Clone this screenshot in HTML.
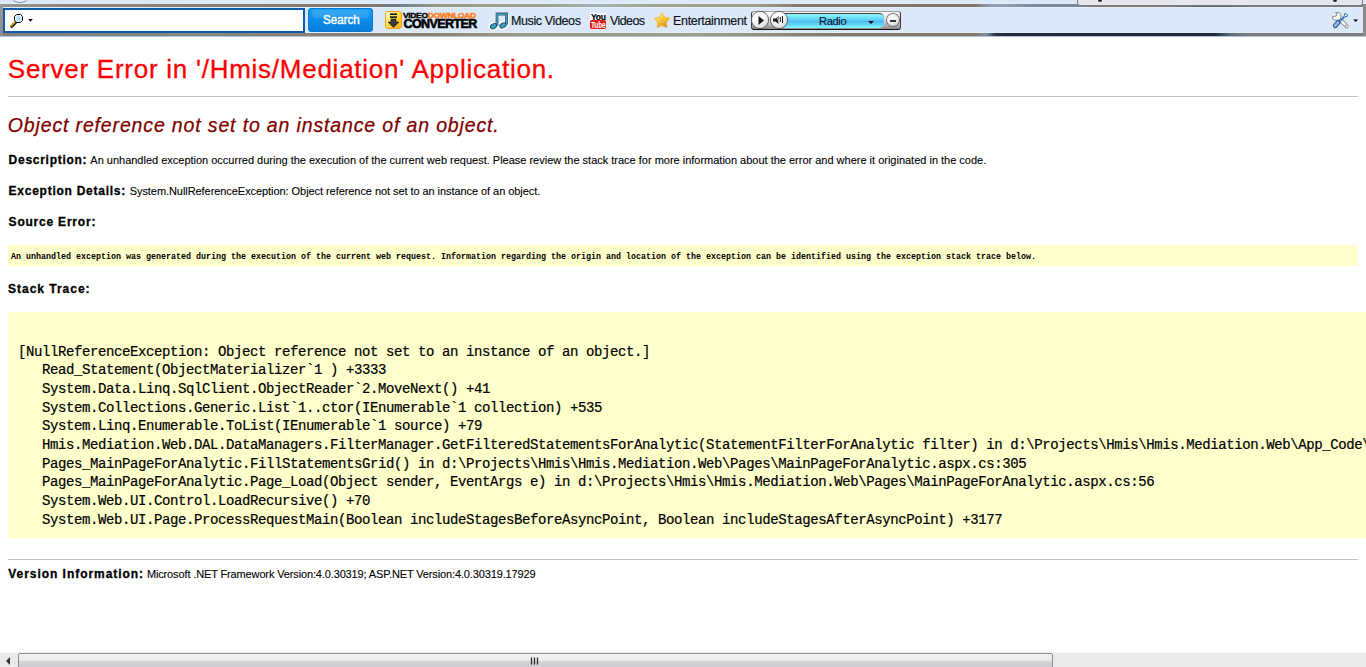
<!DOCTYPE html>
<html><head><meta charset="utf-8"><title>Server Error</title>
<style>
html,body{margin:0;padding:0;width:1366px;height:667px;overflow:hidden;background:#fff}
body{position:relative;font-family:"Liberation Sans",sans-serif}
.tx{position:absolute;white-space:pre;line-height:20px}
.bl{display:inline-block;width:0;height:0;vertical-align:baseline}
.abs{position:absolute}
.hr{position:absolute;left:8px;width:1350px;height:1px;background:#c0c0c0}
.yb{position:absolute;background:#ffffcc}
#stk{position:absolute;left:18px;margin:0;font-family:"Liberation Mono",monospace;font-size:14px;letter-spacing:-0.4px;line-height:18.65px;white-space:pre;color:#000;-webkit-text-stroke:0.2px #000}
/* toolbar */
#tb{position:absolute;left:0;top:0;width:1366px;height:37px;background:#dae8f7;overflow:hidden}
#tb .band{position:absolute;left:0;width:1366px;height:3px}
#tb .tk{position:absolute;color:#0a1020;font-size:12.5px;line-height:15px;white-space:pre;-webkit-text-stroke:0.15px #0a1020}
</style></head><body>

<div id="tb">
  <div class="abs" style="left:0;top:0;width:1366px;height:4px;background:#dce9f7"></div>
  <div class="abs" style="left:0;top:3px;width:1366px;height:1px;background:#e3effc"></div>
  <div class="band" style="top:4px;background:linear-gradient(to right,#9c9894 0px,#8e857c 60px,#877a6e 300px,#857a70 370px,#6f7e8e 400px,#9a9a82 440px,#9b9f88 540px,#a3b2b2 600px,#9fa58c 650px,#9c9c84 760px,#857868 800px,#847666 975px,#8aa0b8 990px,#8a9cb0 1010px,#7a8a9a 1035px,#7a8a9a 1077px,#867a70 1090px,#80786e 1170px,#5e6670 1200px,#646a72 1230px,#7a7a7a 1250px,#7a7a7a 1362px,#8c8c8c 1366px)"></div>
  <div class="abs" style="left:0;top:7px;width:1366px;height:1px;background:#e1eefc"></div>
  <div class="abs" style="left:0;top:32px;width:1366px;height:1px;background:#e1eefc"></div>
  <div class="band" style="top:33px;background:linear-gradient(to right,#7f7f7f 0px,#8a8580 200px,#8a7f74 330px,#8c7f6e 420px,#9a9a86 520px,#9ca088 700px,#857868 840px,#857868 975px,#8090a0 986px,#2a3848 995px,#1e2c3c 1005px,#1c2a3a 1215px,#5a6a7a 1230px,#7c7c7c 1245px,#7c7c7c 1362px)"></div>
  <div class="abs" style="left:0;top:36px;width:1366px;height:1px;background:#b2c2d4"></div>
  <div class="abs" style="left:0;top:4px;width:3px;height:32px;background:linear-gradient(#9c9a98,#8c8c8c)"></div>
  <div class="abs" style="left:1363px;top:4px;width:3px;height:32px;background:#8a8a8a"></div>
  <!-- tooltip remnant at top right -->
  <div class="abs" style="left:1077px;top:-4px;width:284px;height:8px;background:#e6e6ef;border:1px solid #7c7c7c;border-radius:0 0 3px 3px"></div>
  <div class="abs" style="left:1098px;top:0;width:4px;height:2px;background:#222;border-radius:0 0 2px 2px"></div>
  <div class="abs" style="left:1333px;top:0;width:4px;height:2px;background:#222;border-radius:0 0 2px 2px"></div>
  <!-- ellipse at top-left -->
  <div class="abs" style="left:13px;top:-4px;width:12px;height:5px;border:1px solid #7f94ab;border-radius:50%;background:#e8f0f8"></div>

  <!-- search box -->
  <div class="abs" style="left:3px;top:8px;width:298px;height:21px;border:2px solid #0d5cab;background:#fff"></div>
  <svg class="abs" style="left:8px;top:12px" width="28" height="18" viewBox="0 0 28 18">
    <path d="M7.6 10.4 L3.6 14.4" stroke="#000" stroke-width="2.8" stroke-linecap="round"/>
    <path d="M7 10 L3 14" stroke="#f5b400" stroke-width="1.7" stroke-linecap="round"/>
    <path d="M8.6 2.5 h3.8 l2.1 2.1 v3.8 l-2.1 2.1 h-3.8 l-2.1 -2.1 v-3.8 z" fill="#e6f6fe" stroke="#000" stroke-width="1"/>
    <rect x="8.5" y="4.5" width="4" height="4" fill="#a9dcf8"/>
    <path d="M20.2 7 h4.6 l-2.3 2.7 z" fill="#000"/>
  </svg>
  <!-- search button -->
  <div class="abs" style="left:308px;top:8px;width:65px;height:24px;border-radius:4px;background:linear-gradient(#18a2f6,#0a8ae8 55%,#0a7edb);box-shadow:inset 0 0 0 1px #0a78d0"></div>
  <div class="abs" style="left:312px;top:10px;width:57px;height:8px;border-radius:4px;background:rgba(255,255,255,0.13)"></div>
  <div class="tk" style="left:322.5px;top:12px;color:#fff;font-size:13.5px;letter-spacing:0px;-webkit-text-stroke:0.45px #fff;transform:scaleX(0.86);transform-origin:0 0">Search</div>

  <!-- video download converter logo -->
  <div class="abs" style="left:385px;top:11px;width:15px;height:16px;border:1px solid #f0a020;border-radius:3px;background:linear-gradient(135deg,#fffbe0 0%,#ffe45a 40%,#ffb010 100%)"></div>
  <svg class="abs" style="left:385px;top:11px" width="18" height="18" viewBox="0 0 18 18">
    <rect x="5" y="2.4" width="7" height="1.6" fill="#111"/>
    <rect x="5" y="5.3" width="7" height="1.6" fill="#111"/>
    <path d="M6 8 h5 v3 h3 l-5.5 5.5 l-5.5 -5.5 h3 z" fill="#3a3a3a" stroke="#111" stroke-width="0.6"/>
  </svg>
  <div class="abs" style="left:403px;top:11.5px;font:bold 8.5px 'Liberation Sans';line-height:8px;letter-spacing:-0.35px;white-space:pre;color:#000;-webkit-text-stroke:0.45px #000;transform:scaleY(0.88);transform-origin:0 0">VIDEO<span style="color:#ff7a12;-webkit-text-stroke:0.45px #ff7a12">DOWNLOAD</span></div>
  <div class="abs" style="left:403.5px;top:19px;font:900 12.5px 'Liberation Sans';font-weight:bold;line-height:11px;letter-spacing:-0.6px;white-space:pre;color:#000;-webkit-text-stroke:0.6px #000">CONVERTER</div>

  <!-- music note -->
  <svg class="abs" style="left:488px;top:10px" width="22" height="21" viewBox="0 0 22 21">
    <g fill="none" stroke="#fff" stroke-width="4.2" stroke-linejoin="round" stroke-linecap="round" opacity="0.95">
      <path d="M9 15.5 V4 H18.5 V14.5"/>
      <ellipse cx="5.6" cy="16.2" rx="3.3" ry="2.2" transform="rotate(-28 5.6 16.2)"/>
      <ellipse cx="15" cy="15.4" rx="3.3" ry="2.2" transform="rotate(-28 15 15.4)"/>
    </g>
    <path d="M9 15.5 V4 H18.5 V14.5" fill="none" stroke="#1d5468" stroke-width="2.8" stroke-linejoin="miter"/>
    <path d="M9 15.5 V4.2 H18.5 V14.5" fill="none" stroke="#45a8cc" stroke-width="1.2" stroke-linejoin="miter"/>
    <ellipse cx="5.6" cy="16.2" rx="3.4" ry="2.3" transform="rotate(-28 5.6 16.2)" fill="#3d9fc4" stroke="#1d5468" stroke-width="1"/>
    <ellipse cx="15" cy="15.4" rx="3.4" ry="2.3" transform="rotate(-28 15 15.4)" fill="#3d9fc4" stroke="#1d5468" stroke-width="1"/>
  </svg>
  <div class="tk" style="left:511px;top:14px;letter-spacing:-0.38px">Music Videos</div>

  <!-- youtube -->
  <div class="abs" style="left:590px;top:13px;width:16px;height:7px;background:#fff"></div>
  <div class="abs" style="left:591px;top:12.5px;font:bold 8.5px 'Liberation Sans';line-height:8px;letter-spacing:-0.2px;color:#000;white-space:pre;-webkit-text-stroke:0.2px #000">You</div>
  <div class="abs" style="left:590px;top:20px;width:16px;height:9px;background:#e81c10;border-radius:2px"></div>
  <div class="abs" style="left:590.5px;top:19.5px;font:bold 9px 'Liberation Sans';line-height:10px;letter-spacing:-0.2px;color:#fff;white-space:pre;transform:scaleX(0.72);transform-origin:0 0">Tube</div>
  <div class="tk" style="left:610px;top:14px;letter-spacing:-0.6px">Videos</div>

  <!-- star -->
  <svg class="abs" style="left:653px;top:11px" width="18" height="18" viewBox="0 0 18 18">
    <defs><linearGradient id="sg" x1="0" y1="0" x2="0.6" y2="1"><stop offset="0" stop-color="#ffec90"/><stop offset="0.55" stop-color="#f8cc40"/><stop offset="1" stop-color="#d88a18"/></linearGradient></defs>
    <path d="M9.00 1.50 L11.76 6.10 L16.99 7.30 L13.47 11.35 L13.94 16.70 L9.00 14.60 L4.06 16.70 L4.53 11.35 L1.01 7.30 L6.24 6.10 Z" fill="url(#sg)" stroke="#e8b030" stroke-width="0.6" stroke-linejoin="round"/>
  </svg>
  <div class="tk" style="left:673px;top:14px;letter-spacing:-0.32px">Entertainment</div>

  <!-- radio widget -->
  <div class="abs" style="left:751px;top:11px;width:148px;height:17px;border:1px solid #3a3a3a;border-top-color:#9a9a9a;border-bottom-color:#111;border-radius:3px;background:linear-gradient(#fafafa,#e0e0e0 45%,#b4b4b4 75%,#8c8c8c)"></div>
  <div class="abs" style="left:784px;top:13px;width:100px;height:15px;border-radius:0 5px 5px 0;border-top:1px solid #4a3c3c;box-sizing:border-box;background:linear-gradient(#88fcff 0%,#6cdaf8 30%,#50bdf0 52%,#62d4f6 75%,#84fbff 100%)"></div>
  <div class="abs" style="left:752px;top:12px;width:16px;height:16px;border-radius:50%;background:radial-gradient(circle at 40% 30%,#fff 0%,#f6f6f6 45%,#c4c4c4 100%);box-shadow:0 0 0 1px #5a5a5a"></div>
  <svg class="abs" style="left:756px;top:15px" width="10" height="11" viewBox="0 0 10 11"><path d="M2.5 1 L8 5.5 L2.5 10 Z" fill="#1a1a1a"/></svg>
  <div class="abs" style="left:771px;top:12px;width:16px;height:16px;border-radius:50%;background:radial-gradient(circle at 40% 30%,#fff 0%,#f6f6f6 45%,#c4c4c4 100%);box-shadow:0 0 0 1px #5a5a5a"></div>
  <svg class="abs" style="left:772px;top:14px" width="13" height="12" viewBox="0 0 13 12"><path d="M1 4.5 h2.5 l3 -2.5 v8 l-3 -2.5 h-2.5 z" fill="#1a1a1a"/><path d="M4 1.5 L8 10" stroke="#fff" stroke-width="0.8"/><path d="M8.3 3 v5 M10.5 2 v7" stroke="#111" stroke-width="1"/></svg>
  <div class="tk" style="left:819px;top:14px;font-size:11px;color:#0a1830;letter-spacing:-0.3px">Radio</div>
  <svg class="abs" style="left:867px;top:20px" width="8" height="5" viewBox="0 0 8 5"><path d="M1 1 h6 l-3 3 z" fill="#111"/></svg>
  <div class="abs" style="left:887px;top:14px;width:12px;height:12px;border-radius:50%;background:radial-gradient(circle at 40% 35%,#fff 0%,#eee 50%,#aaa 100%);box-shadow:0 0 0 1px #707070"></div>
  <div class="abs" style="left:890px;top:20px;width:6px;height:1.5px;background:#333"></div>

  <!-- tools icon -->
  <svg class="abs" style="left:1328px;top:8px" width="36" height="24" viewBox="0 0 36 24">
    <path d="M13.2 12.8 L18.6 18.2" stroke="#8c8c8c" stroke-width="4.2" stroke-linecap="round"/>
    <path d="M13.2 12.8 L18.6 18.2" stroke="#f6f6f4" stroke-width="2.4" stroke-linecap="round"/>
    <path d="M7.5 4.6 L11.2 4.6 L12.8 6.5 L12.8 10.5 L10.8 12.3 L6.8 12.3 L4.5 10.5 L4.5 8.6 L6.6 8.6 L8.3 7.8 L8.6 6 Z" fill="#f4f4f2" stroke="#8a8a8a" stroke-width="1"/>
    <circle cx="17.8" cy="17.4" r="0.7" fill="#555"/>
    <path d="M17.2 5.2 L20 7.6 L17.8 8.8 L16.2 7.2 Z" fill="#fff" stroke="#2a62b4" stroke-width="1"/>
    <path d="M16.8 8.2 L11.5 13.2" stroke="#2a62b4" stroke-width="2"/>
    <path d="M16.8 8.2 L11.5 13.2" stroke="#fff" stroke-width="0.8" stroke-dasharray="0.9 0.9"/>
    <path d="M10 12.2 L12.4 14.6 L8.4 19.2 Q7.2 20.2 6 19 L5.6 18.4 Q5 17.2 6 16.2 Z" fill="#b0b8d8" stroke="#2a62b4" stroke-width="1.2" stroke-linejoin="round"/>
    <path d="M25.2 11.5 h5 l-2.5 2.6 z" fill="#000"/>
  </svg>
</div>

<div class="hr" style="top:96px"></div>
<div class="yb" style="left:8px;top:245px;width:1350px;height:21px"></div>
<div class="yb" style="left:8px;top:312px;width:1358px;height:226px"></div>

<div id="t1" class="tx" style="font:normal 26px 'Liberation Sans';color:#ff0000;letter-spacing:0.7444px;left:7.80px;top:53.60px;-webkit-text-stroke:0.3px #ff0000">Server Error in '/Hmis/Mediation' Application.<i class="bl"></i></div>
<div id="t2" class="tx" style="font:italic 19.5px 'Liberation Sans';color:#800000;letter-spacing:0.8522px;left:7.80px;top:113.60px;-webkit-text-stroke:0.25px #800000">Object reference not set to an instance of an object.<i class="bl"></i></div>
<div id="l1" class="tx" style="font:bold 12px 'Liberation Sans';color:#000;letter-spacing:0.7262px;left:8.60px;top:153.00px;-webkit-text-stroke:0.3px #000">Description:<i class="bl"></i></div>
<div id="d1" class="tx" style="font:normal 11px 'Liberation Sans';color:#000;letter-spacing:-0.0058px;left:90.30px;top:154.00px;-webkit-text-stroke:0.1px #000">An unhandled exception occurred during the execution of the current web request. Please review the stack trace for more information about the error and where it originated in the code.<i class="bl"></i></div>
<div id="l2" class="tx" style="font:bold 12px 'Liberation Sans';color:#000;letter-spacing:0.7393px;left:8.60px;top:184.00px;-webkit-text-stroke:0.3px #000">Exception Details:<i class="bl"></i></div>
<div id="d2" class="tx" style="font:normal 11px 'Liberation Sans';color:#000;letter-spacing:-0.0630px;left:129.70px;top:185.00px;-webkit-text-stroke:0.1px #000">System.NullReferenceException: Object reference not set to an instance of an object.<i class="bl"></i></div>
<div id="l3" class="tx" style="font:bold 12px 'Liberation Sans';color:#000;letter-spacing:0.7867px;left:8.60px;top:215.00px;-webkit-text-stroke:0.3px #000">Source Error:<i class="bl"></i></div>
<div id="s1" class="tx" style="font:bold 8.333px 'Liberation Mono';color:#000;letter-spacing:0.0013px;left:11.10px;top:251.90px">An unhandled exception was generated during the execution of the current web request. Information regarding the origin and location of the exception can be identified using the exception stack trace below.<i class="bl"></i></div>
<div id="l4" class="tx" style="font:bold 12px 'Liberation Sans';color:#000;letter-spacing:0.9850px;left:8.05px;top:281.70px;-webkit-text-stroke:0.3px #000">Stack Trace:<i class="bl"></i></div>
<div id="l5" class="tx" style="font:bold 12px 'Liberation Sans';color:#000;letter-spacing:0.9536px;left:8.30px;top:566.60px;-webkit-text-stroke:0.3px #000">Version Information:<i class="bl"></i></div>
<div id="d3" class="tx" style="font:normal 11px 'Liberation Sans';color:#000;letter-spacing:-0.1345px;left:146.90px;top:567.60px;-webkit-text-stroke:0.1px #000">Microsoft .NET Framework Version:4.0.30319; ASP.NET Version:4.0.30319.17929<i class="bl"></i></div>

<pre id="stk" style="top:342.70px"><i id="stkbl" class="bl"></i>[NullReferenceException: Object reference not set to an instance of an object.]
   Read_Statement(ObjectMaterializer`1 ) +3333
   System.Data.Linq.SqlClient.ObjectReader`2.MoveNext() +41
   System.Collections.Generic.List`1..ctor(IEnumerable`1 collection) +535
   System.Linq.Enumerable.ToList(IEnumerable`1 source) +79
   Hmis.Mediation.Web.DAL.DataManagers.FilterManager.GetFilteredStatementsForAnalytic(StatementFilterForAnalytic filter) in d:\Projects\Hmis\Hmis.Mediation.Web\App_Code\DAL\DataManagers\FilterManager.cs:45
   Pages_MainPageForAnalytic.FillStatementsGrid() in d:\Projects\Hmis\Hmis.Mediation.Web\Pages\MainPageForAnalytic.aspx.cs:305
   Pages_MainPageForAnalytic.Page_Load(Object sender, EventArgs e) in d:\Projects\Hmis\Hmis.Mediation.Web\Pages\MainPageForAnalytic.aspx.cs:56
   System.Web.UI.Control.LoadRecursive() +70
   System.Web.UI.Page.ProcessRequestMain(Boolean includeStagesBeforeAsyncPoint, Boolean includeStagesAfterAsyncPoint) +3177</pre>
<div class="hr" style="top:559px"></div>

<!-- horizontal scrollbar -->
<div class="abs" style="left:0;top:652px;width:1366px;height:15px;background:#e9e9e9;border-top:1px solid #f2f2f2;box-sizing:border-box"></div>
<svg class="abs" style="left:4px;top:656px" width="8" height="10" viewBox="0 0 8 10"><path d="M6 1 L2 5 L6 9 Z" fill="#333"/></svg>
<div class="abs" style="left:18px;top:653px;width:1035px;height:16px;box-sizing:border-box;border:1px solid #8e8e8e;border-radius:2px;background:linear-gradient(#f3f3f3 0%,#ececec 45%,#d6d6d9 50%,#cacace 100%)"></div>
<svg class="abs" style="left:530px;top:657px" width="10" height="8" viewBox="0 0 10 8"><path d="M1.5 0.5 v7 M4.5 0.5 v7 M7.5 0.5 v7" stroke="#2a2a2a" stroke-width="1.3"/></svg>

</body></html>
